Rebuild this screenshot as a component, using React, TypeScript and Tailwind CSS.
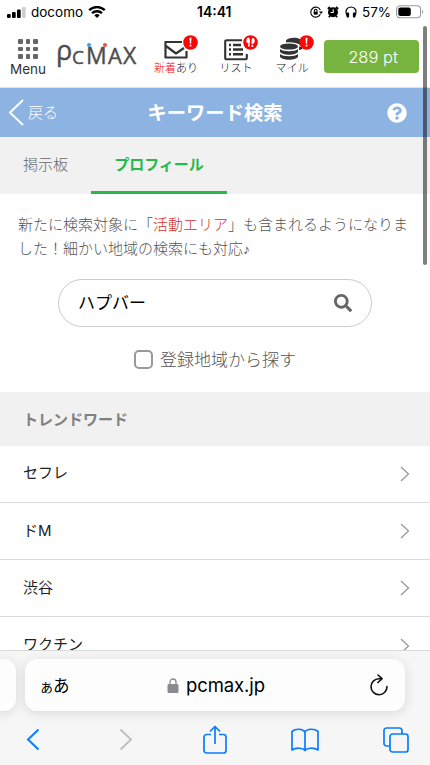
import type { ReactNode } from "react";
import { FaQuestionCircle, FaSearch } from "react-icons/fa";

const trendWords = ["セフレ", "ドM", "渋谷", "ワクチン"];

function StatusBar() {
  return (
    <div className="flex h-6 items-center pl-[7px] pr-[4px] text-black">
      <svg width="19" height="11" viewBox="0 0 19 11" className="shrink-0">
        <rect x="0" y="7" width="3.7" height="4" rx="1" />
        <rect x="5" y="5" width="3.7" height="6" rx="1" />
        <rect x="10" y="2.5" width="3.7" height="8.5" rx="1" />
        <rect x="15" y="0" width="3.7" height="11" rx="1" fill="#cfcfcf" />
      </svg>
      <span className="ml-[5px] w-[52px] whitespace-nowrap text-[13.5px] leading-6">docomo</span>
      <svg width="18" height="12" viewBox="0 0 18 12" className="ml-[5px] shrink-0" fill="none" stroke="#000" strokeWidth="2.4">
        <path d="M1.2 4.2a11.2 11.2 0 0 1 15.6 0" />
        <path d="M4 7.2a7.2 7.2 0 0 1 10 0" />
        <path d="M9 12L6.3 9.3a3.9 3.9 0 0 1 5.4 0z" fill="#000" stroke="none" />
      </svg>
      <span className="ml-[91px] w-[38px] whitespace-nowrap text-[14px] font-semibold leading-6">14:41</span>
      <svg width="13" height="12" viewBox="0 0 13 12" className="ml-[75px] shrink-0" fill="none" stroke="#000" strokeWidth="1.1">
        <path d="M10.3 4A5 5 0 1 0 10.3 8.3" />
        <path d="M9 5.5h4L11 8z" fill="#000" stroke="none" />
        <rect x="3.7" y="5.6" width="4" height="3" fill="#000" stroke="none" />
        <path d="M4.4 5.7V4.6a1.3 1.3 0 0 1 2.6 0v1.1" />
      </svg>
      <svg width="12" height="12" viewBox="0 0 12 12" className="ml-[4px] shrink-0">
        <circle cx="6" cy="6.3" r="5" />
        <path d="M.9 3L3 1M9 1L11.1 3M2.9 10l-.9 1.3M9.1 10l.9 1.3" stroke="#000" strokeWidth="2" />
        <path d="M6.2 3.3v3.2H3.6" fill="none" stroke="#fff" strokeWidth="1.1" />
      </svg>
      <svg width="12" height="12" viewBox="0 0 12 12" className="ml-[6px] shrink-0">
        <path d="M2 9.5C-.4 4.5 2 1 6 1s6.4 3.5 4 8.5" fill="none" stroke="#000" strokeWidth="1.2" />
        <rect x="1.5" y="6.5" width="2.6" height="5" rx="1" />
        <rect x="7.9" y="6.5" width="2.6" height="5" rx="1" />
      </svg>
      <span className="ml-[5px] w-[30px] whitespace-nowrap text-[13.5px] leading-6">57%</span>
      <svg width="28" height="14" viewBox="0 0 28 14" className="ml-[4px] shrink-0">
        <rect x=".6" y=".8" width="24" height="12" rx="3.5" fill="none" stroke="#999" strokeWidth="1.1" />
        <rect x="2.3" y="2.5" width="12.5" height="8.6" rx="2" />
        <path d="M26.2 4.7c1.4.7 1.4 3.5 0 4.2z" fill="#999" />
      </svg>
    </div>
  );
}

function Logo() {
  return (
    <div className="relative ml-[10px] mt-[16px] flex h-[28px] w-[84px] shrink-0 items-baseline font-['Open_Sans',sans-serif] leading-[28px] text-[#4d4d4d] [-webkit-text-stroke:0.4px_#4d4d4d]">
      <span className="w-[16px] -translate-y-[4px] text-[27px]">ρ</span>
      <span className="w-[14px] text-[19px]">C</span>
      <span className="w-[22px] text-[23px]">M</span>
      <span className="w-[15px] text-[22px]">A</span>
      <span className="w-[15px] text-[23px]">X</span>
      <span className="absolute left-[31px] top-[3px] h-1 w-1 rounded-full bg-[#36a5e8]" />
      <span className="absolute left-[47px] top-[3px] h-1 w-1 rounded-full bg-[#ee5148]" />
    </div>
  );
}

function NavItem({ label, badge, className, children }: { label: ReactNode; badge: ReactNode; className: string; children: ReactNode }) {
  return (
    <div className={`flex shrink-0 flex-col items-center pt-[13px] ${className}`}>
      <div className="relative flex h-[25px] w-[24px] items-center">
        {children}
        <svg width="15" height="15" viewBox="0 0 15 15" className="absolute -right-[10px] -top-[2px]">
          <circle cx="7.5" cy="7.5" r="7.3" fill="#fb0505" />
          {badge}
        </svg>
      </div>
      <span className="-mt-[3px] whitespace-nowrap text-[11px] font-light leading-[18px] text-[#111]">{label}</span>
    </div>
  );
}

const exclamation = <path d="M6.5 2.8h2l-.4 6H6.9zM6.6 9.8h1.8v1.8H6.6z" fill="#fff" />;

const footprints = (
  <g fill="#fff">
    <path d="M5.8 2.6c1.600 2 1.300 4 .8 6.300-2-.2-3.200-1-3.300-2.800-.1-1.900.9-3.500 2.500-3.500z" />
    <path d="M9.500 2.800c1.900.6 2.400 2 2.200 3.500-.2 1.700-1.100 2.700-2.900 3.200-.6-2-.5-4.400.7-6.700z" />
    <path d="M5 9.300h1.700v2.200H5zM8.500 10h1.700v2H8.500z" />
  </g>
);

function SiteHeader() {
  return (
    <div className="flex h-16 border-b border-[#d8e3f1] text-[#333]">
      <div className="ml-[10px] flex w-9 shrink-0 flex-col items-center pt-[15px]">
        <div className="grid grid-cols-3 gap-x-[3px] gap-y-[3px]">
          {Array.from({ length: 9 }, (_, i) => (
            <span key={i} className="h-[4.5px] w-[4.5px] rounded-[1px] bg-[#666]" />
          ))}
        </div>
        <span className="text-[13.5px] leading-[20px]">Menu</span>
      </div>
      <Logo />
      <NavItem className="ml-[13px] w-[46px]" badge={exclamation} label={<><span className="text-[#fb0505]">新着</span>あり</>}>
        <svg width="24" height="18" viewBox="0 0 24 18" fill="none" stroke="#333" strokeWidth="2.2" strokeLinejoin="round">
          <path d="M18 1H1.5v15.5h21V10" />
          <path d="M2 5l10 7.5L20 7" />
        </svg>
      </NavItem>
      <NavItem className="ml-[20px] w-[34px]" badge={footprints} label="リスト">
        <svg width="24" height="22" viewBox="0 0 24 22" fill="none" stroke="#333" strokeWidth="2.1">
          <path d="M18 1.2H2.8Q1.2 1.2 1.2 2.8v15.900q0 1.600 1.600 1.600h18.400q1.600 0 1.600-1.600V15" />
          <path d="M5 6h2m2 0h8M5 10.500h2m2 0h10M5 15.200h2m2 0h10" strokeWidth="2.4" />
        </svg>
      </NavItem>
      <NavItem className="ml-[22px] w-[34px]" badge={exclamation} label="マイル">
        <svg width="24" height="25" viewBox="0 0 24 25" fill="#333">
          <path d="M6 3.500C8 .3 16 .2 20 2v6c-3-2.200-8-3-14-2.500z" />
          <path d="M19 9.500c1.500.4 3 .4 4 0-.2 2-1.500 3.500-4 3.500z" />
          <ellipse cx="9" cy="9.500" rx="9" ry="3.100" />
          <path d="M0 12c3 3 15 3 18 0v2.700c-2 4-16 4-18 0zM0 17c3 3 15 3 18 0v2.700c-2 4-16 4-18 0z" />
        </svg>
      </NavItem>
      <div className="ml-auto mr-[11px] mt-[16px] flex h-[33px] w-[95px] items-center justify-center rounded-[4px] bg-[#77b43f] pl-[7px] pr-[4px] pt-px text-[16.5px] font-light text-white">289 pt</div>
    </div>
  );
}

function Chevron() {
  return (
    <svg width="10" height="16" viewBox="0 0 10 16" fill="none" stroke="#999" strokeWidth="1.3" className="shrink-0">
      <path d="M1 1l7.5 7L1 15" />
    </svg>
  );
}

function BrowserBar() {
  return (
    <div className="absolute inset-x-0 bottom-0 h-[115px] overflow-hidden border-t border-[#dadada] bg-[#f6f6f7]">
      <div className="mt-[8px] flex h-[52px] gap-[9px]">
        <div className="-ml-3 w-7 shrink-0 rounded-[12px] bg-[#fdfdfd] shadow-[0_2px_12px_rgba(0,0,0,0.12)]" />
        <div className="flex w-[380px] shrink-0 items-center rounded-[12px] bg-[#fdfdfd] pl-[14px] pr-[16px] text-black shadow-[0_2px_12px_rgba(0,0,0,0.12)]">
          <span className="w-[31px] whitespace-nowrap pt-[2px] leading-6 tracking-[-1px]"><span className="text-[15px]">ぁ</span><span className="text-[16.5px]">あ</span></span>
          <svg width="12" height="15" viewBox="0 0 12 15" className="ml-[97px] shrink-0">
            <path d="M3 7V4a3 3 0 0 1 6 0v3" fill="none" stroke="#8a8a8e" strokeWidth="1.3" />
            <rect x=".5" y="6" width="11" height="9" rx="1.5" fill="#8a8a8e" />
          </svg>
          <span className="ml-[7px] pt-[2px] text-[18.5px] tracking-[-0.1px]">pcmax.jp</span>
          <svg width="20" height="23" viewBox="0 0 20 23" className="ml-auto shrink-0" fill="none" stroke="#111" strokeWidth="1.6" strokeLinecap="round" strokeLinejoin="round">
            <path d="M12 4.7H10A8 8 0 1 0 18 12.5" />
            <path d="M9 1l4 3.7L9 8.5" />
          </svg>
        </div>
      </div>
      <div className="flex h-[54px] items-center pl-[26px] pt-[3px] text-[#0a7cff]">
        <svg width="14" height="23" viewBox="0 0 14 23" fill="none" stroke="currentColor" strokeWidth="2"><path d="M12.5 1.5L2 11.5l10.5 10" /></svg>
        <svg width="14" height="23" viewBox="0 0 14 23" fill="none" stroke="#bdbdc0" strokeWidth="1.8" className="ml-[79px]"><path d="M1.5 1.5L12 11.5l-10.5 10" /></svg>
        <svg width="24" height="29" viewBox="0 0 24 29" fill="none" stroke="currentColor" strokeWidth="1.7" strokeLinejoin="round" className="ml-[70px]">
          <path d="M8 9.5H3.5a2.5 2.5 0 0 0-2.5 2.5v13.5A2.5 2.5 0 0 0 3.5 28h17a2.5 2.5 0 0 0 2.5-2.5V12a2.5 2.5 0 0 0-2.5-2.5H16" />
          <path d="M12 19V1.5M7 6.5l5-5 5 5" />
        </svg>
        <svg width="28" height="24" viewBox="0 0 28 24" fill="none" stroke="currentColor" strokeWidth="1.7" strokeLinejoin="round" className="ml-[64px]">
          <path d="M14 4C12 .5 4.5.3 1 3.5V22c4-2.7 11-2.2 13 .5zM14 4c2-3.5 9.5-3.7 13-.5V22c-4-2.7-11-2.2-13 .5" />
        </svg>
        <svg width="26" height="26" viewBox="0 0 26 26" fill="none" stroke="currentColor" strokeWidth="1.7" className="ml-[64px]">
          <path d="M7 19H3.5A2.5 2.5 0 0 1 1 16.5v-13A2.5 2.5 0 0 1 3.5 1h13A2.5 2.5 0 0 1 19 3.5V7" />
          <rect x="7" y="7" width="18" height="18" rx="2.5" />
        </svg>
      </div>
    </div>
  );
}

export default function App() {
  return (
    <div className="relative h-[765px] w-[430px] overflow-hidden bg-white font-['Inter','Noto_Sans_CJK_JP',sans-serif]">
      <StatusBar />
      <SiteHeader />
      <div className="flex h-[49px] items-center bg-[#8db3e2] text-white">
        <div className="flex w-[140px] items-center pl-[8px]">
          <svg width="16" height="27" viewBox="0 0 16 27" fill="none" stroke="currentColor" strokeWidth="2"><path d="M15 1L2 13.5 15 26" /></svg>
          <span className="ml-[4px] pt-[2px] text-[15px] font-light">戻る</span>
        </div>
        <h1 className="w-[150px] whitespace-nowrap pt-[2px] text-center text-[19.3px] font-semibold">キーワード検索</h1>
        <FaQuestionCircle size={20} className="ml-auto mr-[23px]" />
      </div>
      <div className="flex h-[57px] bg-[#f1f1f1] text-[15px]">
        <div className="w-[91px] pl-[23px] pt-[17px] font-light text-[#666]">掲示板</div>
        <div className="w-[136px] border-b-[3px] border-[#28b84b] pt-[17px] text-center font-bold text-[#28b84b]">プロフィール</div>
      </div>
      <p className="ml-[18px] mt-[19px] w-[396px] text-[15px] font-light leading-6 text-[#555]">
        新たに検索対象に「<span className="text-[#d03030]">活動エリア</span>」も含まれるようになりま<br />した！細かい地域の検索にも対応<span className="font-['DejaVu_Sans',sans-serif] text-[14px]">♪</span>
      </p>
      <div className="ml-[58px] mt-[18px] flex h-[48px] w-[314px] items-center justify-between rounded-full border border-[#ccc] pl-[19px] pr-[19px]">
        <span className="pt-[2px] text-[17px] text-black">ハプバー</span>
        <FaSearch size={18} color="#666" />
      </div>
      <div className="mt-[19px] flex h-[27px] items-center pl-[134px]">
        <span className="h-[19px] w-[19px] rounded-[5px] border-2 border-[#999]" />
        <span className="ml-[7px] pt-[2px] text-[17px] font-light text-[#555]">登録地域から探す</span>
      </div>
      <div className="mt-[19px] flex h-[53.6px] items-center bg-[#f1f1f1] pl-[23px] pt-[2px] text-[15px] font-bold text-[#808080]">トレンドワード</div>
      {trendWords.map((word) => (
        <div key={word} className="flex h-[57.3px] items-center justify-between border-b border-[#d9d9d9] pl-[23px] pr-[20px] text-[15px] text-[#222]">
          <span>{word}</span>
          <Chevron />
        </div>
      ))}
      <div className="absolute left-[423px] top-[26px] h-[239px] w-[4px] rounded-full bg-black/50" />
      <BrowserBar />
    </div>
  );
}
